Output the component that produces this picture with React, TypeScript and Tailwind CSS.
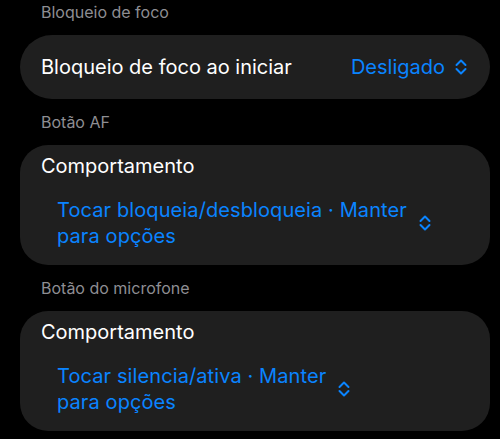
import React from "react";

const Chevrons = () => (
  <svg width="14" height="18" viewBox="0 0 14 18" fill="none" stroke="#0a84ff" strokeWidth="2" strokeLinecap="round" strokeLinejoin="round" className="shrink-0">
    <path d="M2.5 7 L7 2.5 L11.5 7" />
    <path d="M2.5 11 L7 15.5 L11.5 11" />
  </svg>
);

const Header = ({ children }: { children: React.ReactNode }) => (
  <div className="h-[46px] flex items-center pl-[21px] text-[16px] text-[#8e8e93]">{children}</div>
);

const Behavior = ({ line1, line2 }: { line1: string; line2: string }) => (
  <div className="rounded-[28px] bg-[#1f1f1f] pl-[21px] pr-[22px] pt-[8px] pb-[16px]">
    <div className="text-[20px] leading-[26px] text-white">Comportamento</div>
    <div className="mt-[18px] ml-[16px] inline-flex items-center gap-[11px]">
      <div className="text-[20px] leading-[26px] text-[#0a84ff] tracking-[0.1px]">
        {line1}
        <br />
        {line2}
      </div>
      <Chevrons />
    </div>
  </div>
);

export default function App() {
  return (
    <div className="w-[500px] h-[439px] bg-black overflow-hidden" style={{ fontFamily: "Inter, 'Noto Sans', sans-serif" }}>
      <div className="-mt-[11px] pl-[20px] pr-[10px]">
        <Header>Bloqueio de foco</Header>
        <div className="h-[64px] rounded-full bg-[#1f1f1f] flex items-center justify-between pl-[21px] pr-[22px]">
          <span className="text-[20px] text-white">Bloqueio de foco ao iniciar</span>
          <span className="flex items-center gap-[9px] text-[20px] text-[#0a84ff]">
            Desligado
            <Chevrons />
          </span>
        </div>
        <Header>Botão AF</Header>
        <Behavior line1="Tocar bloqueia/desbloqueia · Manter" line2="para opções" />
        <Header>Botão do microfone</Header>
        <Behavior line1="Tocar silencia/ativa · Manter" line2="para opções" />
      </div>
    </div>
  );
}
